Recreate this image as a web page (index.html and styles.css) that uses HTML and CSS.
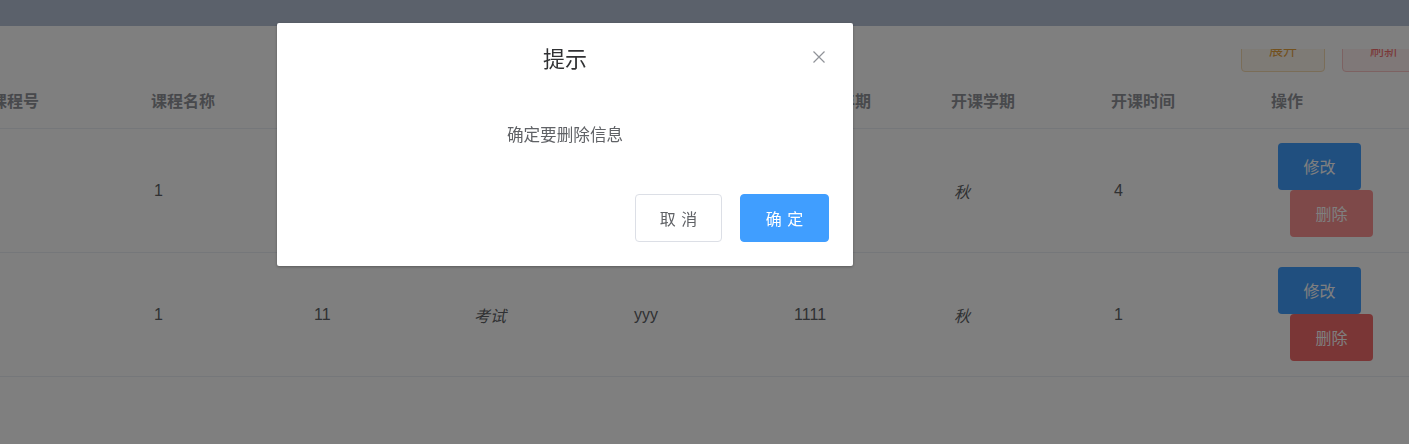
FILE: index.html
```html
<!DOCTYPE html>
<html lang="zh-CN">
<head>
<meta charset="utf-8">
<title>课程管理</title>
<link rel="stylesheet" href="styles.css">
</head>
<body>
<div class="app">
  <header class="topbar"></header>
  <div class="tabstrip"></div>
  <main class="main">
    <div class="content">
      <div class="toolbar">
        <button class="tbtn tbtn-warning">展开</button>
        <button class="tbtn tbtn-danger">刷新</button>
      </div>
      <div class="table">
        <div class="row head">
          <div class="th">课程号</div>
          <div class="th">课程名称</div>
          <div class="th">学分</div>
          <div class="th">考核方式</div>
          <div class="th">任课教师</div>
          <div class="th">开课学年期</div>
          <div class="th">开课学期</div>
          <div class="th">开课时间</div>
          <div class="th">操作</div>
        </div>
        <div class="row">
          <div class="td"></div>
          <div class="td">1</div>
          <div class="td">1</div>
          <div class="td"><em>考试</em></div>
          <div class="td">yyy</div>
          <div class="td">1111</div>
          <div class="td"><em>秋</em></div>
          <div class="td">4</div>
          <div class="td ops">
            <button class="obtn obtn-primary">修改</button>
            <button class="obtn obtn-danger obtn-active">删除</button>
          </div>
        </div>
        <div class="row">
          <div class="td"></div>
          <div class="td">1</div>
          <div class="td">11</div>
          <div class="td"><em>考试</em></div>
          <div class="td">yyy</div>
          <div class="td">1111</div>
          <div class="td"><em>秋</em></div>
          <div class="td">1</div>
          <div class="td ops">
            <button class="obtn obtn-primary">修改</button>
            <button class="obtn obtn-danger">删除</button>
          </div>
        </div>
      </div>
    </div>
  </main>
</div>

<div class="mask"></div>
<div class="dialog" role="dialog">
  <div class="dialog-header">
    <span class="dialog-title">提示</span>
    <button class="dialog-close" aria-label="关闭">
      <svg width="12" height="12" viewBox="0 0 12 12"><path d="M0.5 0.5 L11.5 11.5 M11.5 0.5 L0.5 11.5" stroke="#909399" stroke-width="1.2" fill="none"/></svg>
    </button>
  </div>
  <div class="dialog-body">确定要删除信息</div>
  <div class="dialog-footer">
    <button class="dbtn dbtn-default"><span class="two">取消</span></button>
    <button class="dbtn dbtn-primary"><span class="two">确定</span></button>
  </div>
</div>
</body>
</html>
```
FILE: styles.css
```css
* { box-sizing: border-box; }
html, body { margin: 0; padding: 0; }
body {
  width: 1409px;
  height: 444px;
  overflow: hidden;
  background: #ffffff;
  font-family: "Liberation Sans", "Noto Sans CJK SC", sans-serif;
  color: #606266;
}
button { font-family: inherit; cursor: pointer; }

.app { display: flex; flex-direction: column; height: 444px; }
.topbar { height: 26px; background: #b6c2d6; flex: none; }
.tabstrip { height: 23px; background: #ffffff; flex: none; }
.main { flex: 1; overflow: hidden; }
.content {
  margin-top: -17px;
  margin-left: -19px;
  width: 1445px;
}

.toolbar {
  display: flex;
  justify-content: flex-end;
  gap: 17px;
  height: 40px;
}
.tbtn {
  width: 84px;
  height: 40px;
  border-radius: 4px;
  font-size: 14px;
  border: 1px solid;
  padding: 0 0 7px;
}
.tbtn-warning { background: #fdf6ec; border-color: #f5dab1; color: #e6a23c; }
.tbtn-danger { background: #fef0f0; border-color: #fbc4c4; color: #f56c6c; }

.table { width: 1440px; }
.row {
  display: grid;
  grid-template-columns: repeat(9, 160px);
  height: 124px;
  border-bottom: 1px solid #ebeef5;
  align-items: center;
}
.row.head { height: 57px; }
.th {
  padding-left: 10px;
  font-size: 16px;
  font-weight: bold;
  color: #909399;
  white-space: nowrap;
}
.td {
  padding-left: 13px;
  font-size: 16px;
  color: #606266;
  white-space: nowrap;
}
.td em { font-style: italic; }
.td.ops {
  padding-left: 17px;
  padding-bottom: 2px;
  display: flex;
  flex-direction: column;
  align-items: flex-start;
}
.obtn {
  width: 83px;
  height: 47px;
  border: none;
  border-radius: 4px;
  color: #ffffff;
  font-size: 16px;
  padding: 0;
}
.obtn + .obtn { margin-left: 12px; }
.obtn-primary { background: #409eff; }
.obtn-danger { background: #f56c6c; }
.obtn-active { background: #fc9292; }

.mask {
  position: fixed;
  inset: 0;
  background: rgba(0, 0, 0, 0.5);
}

.dialog {
  position: fixed;
  left: 277px;
  top: 23px;
  width: 576px;
  height: 243px;
  background: #ffffff;
  border-radius: 2px;
  box-shadow: 0 1px 3px rgba(0, 0, 0, 0.3);
  display: flex;
  flex-direction: column;
}
.dialog-header {
  padding: 23px 24px 0;
  height: 51px;
  text-align: center;
}
.dialog-title {
  font-size: 22px;
  line-height: 28px;
  color: #303133;
}
.dialog-close {
  position: absolute;
  right: 28px;
  top: 28px;
  width: 12px;
  height: 12px;
  padding: 0;
  border: none;
  background: transparent;
  display: flex;
}
.dialog-body {
  padding: 50px 24px 0;
  text-align: center;
  font-size: 16.6px;
  line-height: 24px;
  color: #606266;
}
.dialog-footer {
  margin-top: auto;
  padding: 0 24px 24px;
  display: flex;
  justify-content: flex-end;
  gap: 18px;
}
.dbtn {
  height: 48px;
  border-radius: 4px;
  font-size: 16px;
  padding: 0;
  border: 1px solid;
}
.dbtn .two { letter-spacing: 0.34em; margin-right: -0.34em; }
.dbtn-default { width: 87px; background: #ffffff; border-color: #dcdfe6; color: #606266; }
.dbtn-primary { width: 89px; background: #409eff; border-color: #409eff; color: #ffffff; }
```
